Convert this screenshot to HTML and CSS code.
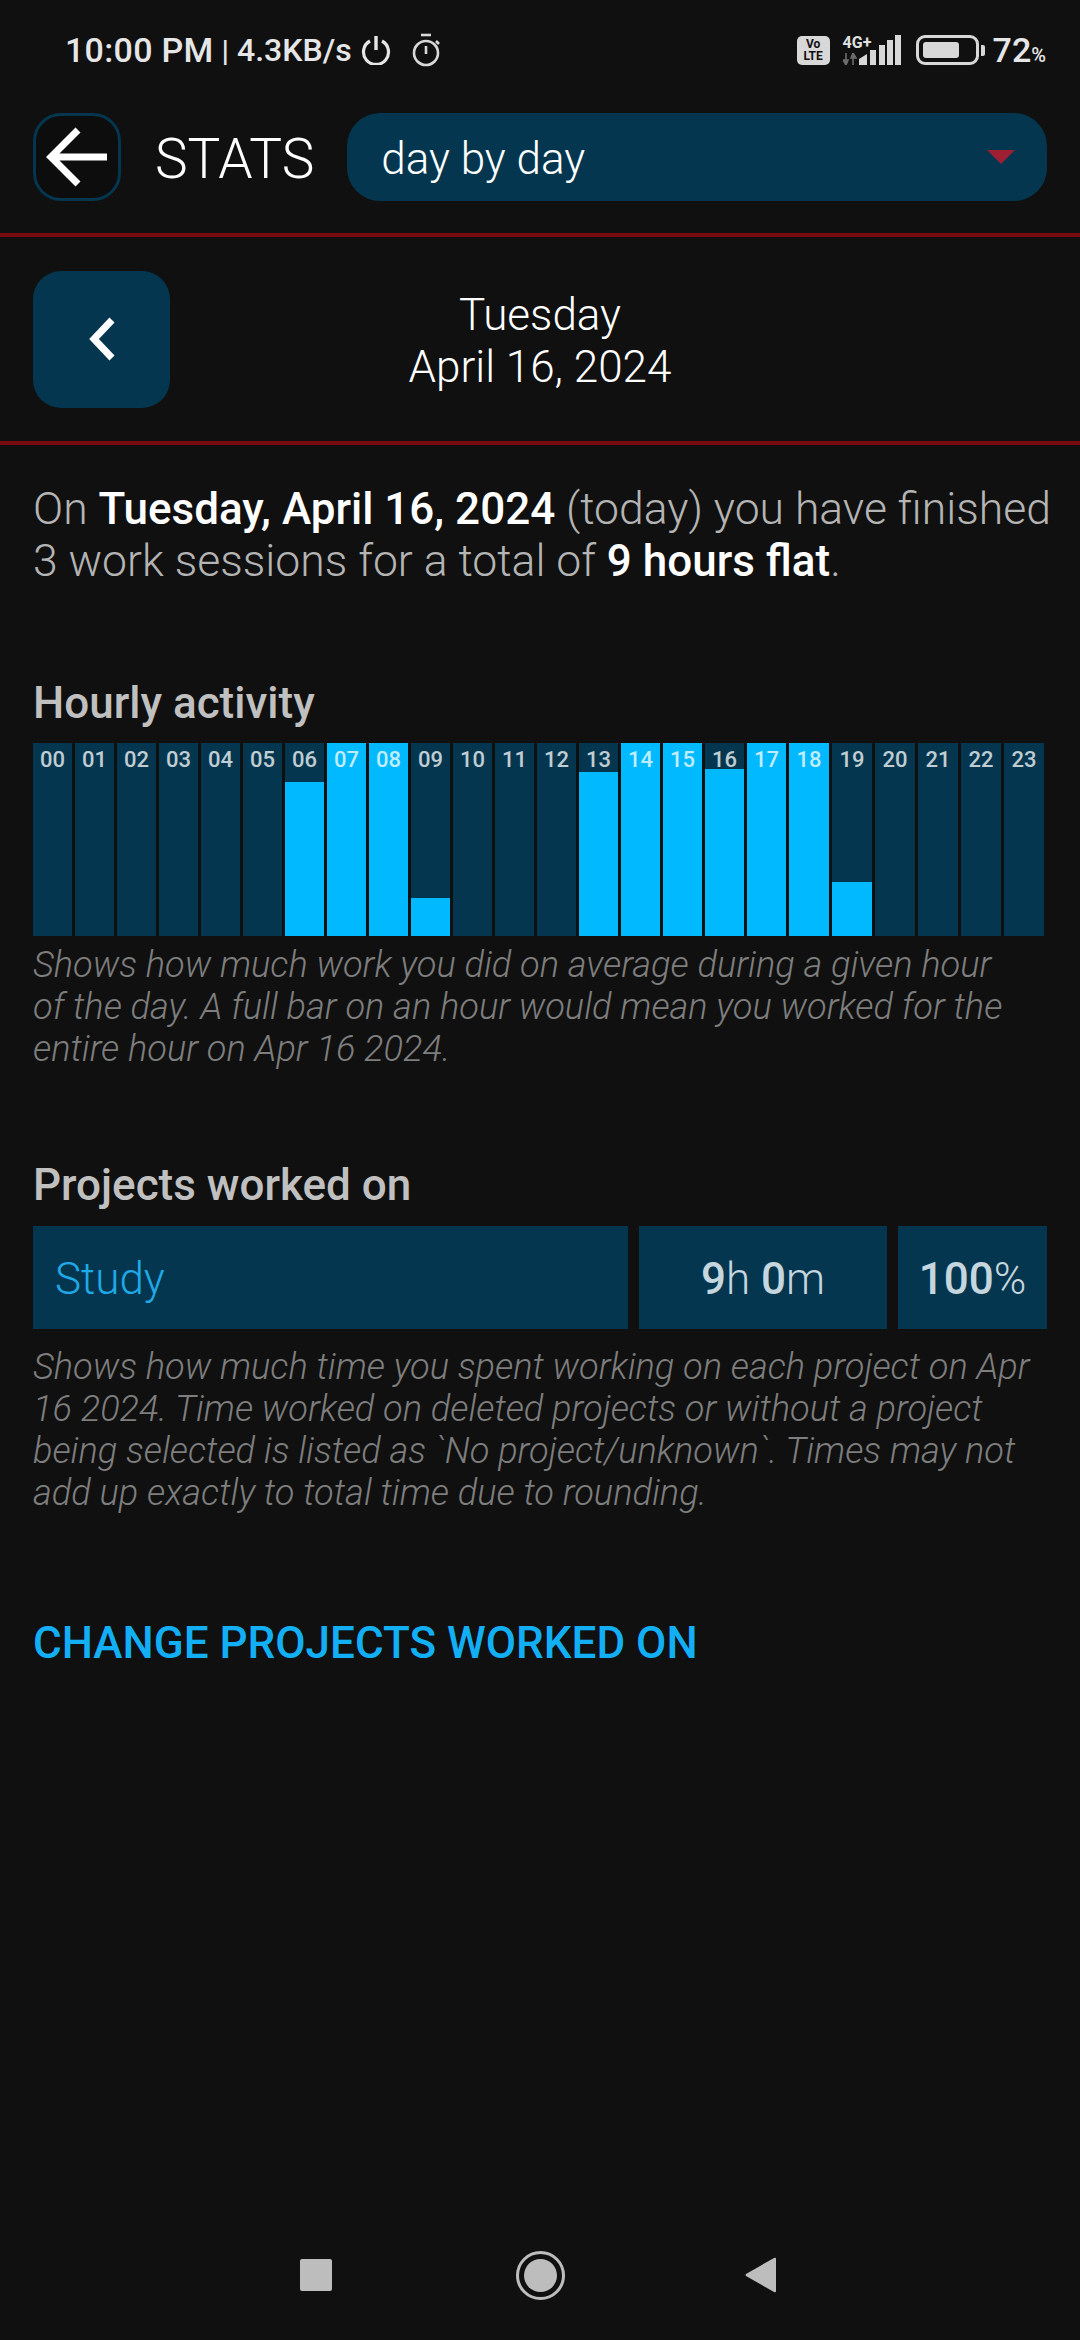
FILE: index.html
```html
<!DOCTYPE html>
<html lang="en">
<head>
    <meta charset="UTF-8">
    <meta name="viewport" content="width=device-width, initial-scale=1.0">
    <title>Stats</title>
    <link rel="stylesheet" href="styles.css">
</head>
<body>
    <div class="page">
        <!-- Status bar -->
        <div class="status-bar">
            <div class="status-left">
                <span class="clock">10:00 PM</span>
                <span class="divider">|</span>
                <span class="speed">4.3KB/s</span>
                <svg class="icon-power" width="30" height="30" viewBox="0 0 30 30">
                    <path d="M9 6 A12.5 12.5 0 1 0 21 6" fill="none" stroke="#e6e6e6" stroke-width="3.2"/>
                    <path d="M15 1 V15" stroke="#e6e6e6" stroke-width="3.4"/>
                </svg>
                <svg class="icon-timer" width="30" height="34" viewBox="0 0 30 34">
                    <path d="M10 2 H20" stroke="#d8d8d8" stroke-width="2.6"/>
                    <circle cx="15" cy="20" r="12" fill="none" stroke="#d8d8d8" stroke-width="2.6"/>
                    <path d="M15 13 V21" stroke="#d8d8d8" stroke-width="2.6"/>
                    <path d="M25 8 L28 11" stroke="#d8d8d8" stroke-width="2.6"/>
                </svg>
            </div>
            <div class="status-right">
                <span class="volte">Vo<br>LTE</span>
                <div class="network">
                    <span class="net-type">4G+</span>
                    <svg class="net-arrows" width="14" height="12" viewBox="0 0 14 12">
                        <path d="M3 0 V8 M0 7 L3 12 L5 7 Z" stroke="#6b6b6b" stroke-width="1.6" fill="#6b6b6b"/>
                        <path d="M10 12 V4 M8 5 L10 0 L13 5 Z" stroke="#6b6b6b" stroke-width="1.6" fill="#6b6b6b"/>
                    </svg>
                </div>
                <svg class="signal" width="42" height="30" viewBox="0 0 42 30">
                    <path d="M0 30 V24 L8 19 V30 Z" fill="#d8d8d8"/>
                    <rect x="11" y="15" width="6" height="15" fill="#d8d8d8"/>
                    <rect x="20" y="10" width="6" height="20" fill="#d8d8d8"/>
                    <rect x="28" y="5" width="6" height="25" fill="#d8d8d8"/>
                    <rect x="36" y="0" width="6" height="30" fill="#d8d8d8"/>
                </svg>
                <div class="battery">
                    <div class="battery-body"><div class="battery-level"></div></div>
                    <div class="battery-nub"></div>
                </div>
                <span class="battery-text">72<small>%</small></span>
            </div>
        </div>

        <!-- Header -->
        <div class="header">
            <button class="back-btn">
                <svg width="62" height="60" viewBox="0 0 62 60">
                    <path d="M61 30 H6 M32 3 L5 30 L32 57" fill="none" stroke="#fff" stroke-width="7"/>
                </svg>
            </button>
            <span class="title">STATS</span>
            <div class="dropdown">
                <span>day by day</span>
                <span class="dropdown-arrow"></span>
            </div>
        </div>

        <!-- Date picker -->
        <div class="date-row">
            <button class="prev-btn">
                <svg width="30" height="46" viewBox="0 0 30 46">
                    <path d="M25 4 L7 23 L25 42" fill="none" stroke="#fff" stroke-width="7"/>
                </svg>
            </button>
            <div class="date-text">Tuesday<br>April 16, 2024</div>
        </div>

        <main class="content">
            <p class="summary">On <b>Tuesday, April 16, 2024</b> (today) you have finished 3 work sessions for a total of <b>9 hours flat</b>.</p>

            <h3 class="section-title hourly-title">Hourly activity</h3>
            <div class="chart">
                <div class="hour"><span>00</span></div>
                <div class="hour"><span>01</span></div>
                <div class="hour"><span>02</span></div>
                <div class="hour"><span>03</span></div>
                <div class="hour"><span>04</span></div>
                <div class="hour"><span>05</span></div>
                <div class="hour"><div class="fill" style="height: 154px"></div><span>06</span></div>
                <div class="hour"><div class="fill" style="height: 100%"></div><span>07</span></div>
                <div class="hour"><div class="fill" style="height: 100%"></div><span>08</span></div>
                <div class="hour"><div class="fill" style="height: 38px"></div><span>09</span></div>
                <div class="hour"><span>10</span></div>
                <div class="hour"><span>11</span></div>
                <div class="hour"><span>12</span></div>
                <div class="hour"><div class="fill" style="height: 164px"></div><span>13</span></div>
                <div class="hour"><div class="fill" style="height: 100%"></div><span>14</span></div>
                <div class="hour"><div class="fill" style="height: 100%"></div><span>15</span></div>
                <div class="hour"><div class="fill" style="height: 167px"></div><span>16</span></div>
                <div class="hour"><div class="fill" style="height: 100%"></div><span>17</span></div>
                <div class="hour"><div class="fill" style="height: 100%"></div><span>18</span></div>
                <div class="hour"><div class="fill" style="height: 54px"></div><span>19</span></div>
                <div class="hour"><span>20</span></div>
                <div class="hour"><span>21</span></div>
                <div class="hour"><span>22</span></div>
                <div class="hour"><span>23</span></div>
            </div>
            <p class="caption">Shows how much work you did on average during a given hour of the day. A full bar on an hour would mean you worked for the entire hour on Apr 16 2024.</p>

            <h3 class="section-title projects-title">Projects worked on</h3>
            <div class="project-row">
                <div class="project-name">Study</div>
                <div class="project-time"><b>9</b>h <b>0</b>m</div>
                <div class="project-pct"><b>100</b>%</div>
            </div>
            <p class="caption">Shows how much time you spent working on each project on Apr 16 2024. Time worked on deleted projects or without a project being selected is listed as `No project/unknown`. Times may not add up exactly to total time due to rounding.</p>

            <a class="change-link" href="#">CHANGE PROJECTS WORKED ON</a>
        </main>

        <!-- Navigation bar -->
        <nav class="nav-bar">
            <div class="nav-square"></div>
            <div class="nav-home"><div class="nav-home-dot"></div></div>
            <svg class="nav-back" width="32" height="36" viewBox="0 0 32 36">
                <path d="M31 2 V34 Q31 36 29 35 L1 19 Q0 18 1 17 L29 1 Q31 0 31 2 Z" fill="#bdbdbd"/>
            </svg>
        </nav>
    </div>
</body>
</html>
```

FILE: styles.css
```css
* {
    box-sizing: border-box;
}

body {
    margin: 0;
    background-color: #101010;
    font-family: 'Roboto', sans-serif;
    color: #fff;
}

p, h3 {
    margin: 0;
}

button {
    padding: 0;
    cursor: pointer;
}

.page {
    display: flex;
    flex-direction: column;
    width: 1080px;
    height: 2340px;
    overflow: hidden;
}

/* Status bar */
.status-bar {
    display: flex;
    justify-content: space-between;
    align-items: center;
    height: 100px;
    padding: 0 34px 0 65px;
}

.status-left {
    display: flex;
    align-items: center;
    color: #e6e6e6;
    font-weight: 500;
}

.clock {
    font-size: 34px;
    letter-spacing: 0.3px;
}

.divider {
    margin: 0 8px;
    font-size: 30px;
}

.speed {
    font-size: 32px;
}

.icon-power {
    margin-left: 9px;
}

.icon-timer {
    margin-left: 20px;
}

.status-right {
    display: flex;
    align-items: center;
}

.volte {
    width: 33px;
    height: 29px;
    padding-top: 2px;
    background-color: #d8d8d8;
    border-radius: 5px;
    color: #101010;
    font-size: 12px;
    font-weight: 700;
    line-height: 12px;
    text-align: center;
}

.network {
    display: flex;
    flex-direction: column;
    width: 29px;
    height: 30px;
    margin-left: 13px;
}

.net-type {
    color: #e0e0e0;
    font-size: 16px;
    font-weight: 700;
    line-height: 15px;
    white-space: nowrap;
}

.net-arrows {
    margin-top: 3px;
}

.signal {
    margin-left: -13px;
}

.battery {
    display: flex;
    align-items: center;
    margin-left: 15px;
}

.battery-body {
    width: 63px;
    height: 30px;
    padding: 4px;
    border: 3px solid #d8d8d8;
    border-radius: 9px;
}

.battery-level {
    width: 36px;
    height: 100%;
    background-color: #d8d8d8;
    border-radius: 3px;
}

.battery-nub {
    width: 4px;
    height: 11px;
    margin-left: 2px;
    background-color: #d8d8d8;
    border-radius: 0 2px 2px 0;
}

.battery-text {
    margin-left: 8px;
    color: #e6e6e6;
    font-size: 34px;
    font-weight: 500;
}

.battery-text small {
    font-size: 20px;
}

/* Header */
.header {
    display: flex;
    align-items: center;
    height: 88px;
    margin-top: 13px;
    padding: 0 33px;
}

.back-btn {
    display: flex;
    align-items: center;
    justify-content: center;
    flex: none;
    width: 88px;
    height: 88px;
    background-color: #0d0d0d;
    border: 3px solid #04374f;
    border-radius: 28px;
}

.title {
    margin-left: 34px;
    padding-top: 3px;
    font-size: 55px;
    font-weight: 300;
}

.dropdown {
    display: flex;
    align-items: center;
    justify-content: space-between;
    flex: 1;
    height: 88px;
    margin-left: 33px;
    padding: 3px 32px 0 34px;
    background-color: #04374f;
    border-radius: 33px;
    font-size: 44px;
    font-weight: 300;
}

.dropdown-arrow {
    width: 0;
    height: 0;
    margin-top: -3px;
    border-left: 14px solid transparent;
    border-right: 14px solid transparent;
    border-top: 14px solid #9c1f33;
}

/* Date picker */
.date-row {
    display: flex;
    align-items: center;
    height: 212px;
    margin-top: 32px;
    padding: 0 33px;
    border-top: 4px solid #7a0a10;
    border-bottom: 4px solid #7a0a10;
}

.prev-btn {
    display: flex;
    align-items: center;
    justify-content: center;
    flex: none;
    width: 137px;
    height: 137px;
    background-color: #04374f;
    border: none;
    border-radius: 28px;
}

.date-text {
    flex: 1;
    padding: 3px 137px 0 0;
    font-size: 44px;
    font-weight: 300;
    line-height: 52px;
    text-align: center;
}

/* Content */
.content {
    flex: 1;
    padding: 0 33px;
}

.summary {
    margin-top: 38px;
    margin-right: -8px;
    color: #b4b4b4;
    font-size: 44.5px;
    font-weight: 300;
    line-height: 52px;
}

.summary b {
    color: #fff;
    font-size: 44px;
    font-weight: 500;
}

.section-title {
    color: #c0c0c0;
    font-size: 44px;
    font-weight: 500;
    line-height: 52px;
}

.hourly-title {
    margin-top: 90px;
}

.projects-title {
    margin-top: 89px;
}

.chart {
    display: grid;
    grid-template-columns: repeat(18, 39px) repeat(6, 40px);
    gap: 3px;
    height: 193px;
    margin-top: 14px;
}

.hour {
    position: relative;
    display: flex;
    align-items: flex-end;
    background-color: #04374f;
}

.hour span {
    position: absolute;
    top: 4px;
    left: 0;
    right: 0;
    color: rgba(255, 255, 255, 0.75);
    font-size: 22px;
    font-weight: 500;
    line-height: 26px;
    text-align: center;
}

.fill {
    width: 100%;
    background-color: #00b9ff;
}

.caption {
    width: 998px;
    margin-top: 8px;
    color: #7e7e7e;
    font-size: 36.2px;
    font-style: italic;
    font-weight: 300;
    line-height: 42px;
}

.project-row {
    display: flex;
    gap: 11px;
    height: 103px;
    margin-top: 15px;
    font-size: 44px;
    font-weight: 300;
}

.project-row > div {
    display: flex;
    align-items: center;
    padding-top: 3px;
    background-color: #04374f;
    white-space: pre;
}

.project-name {
    flex: 1;
    padding-left: 22px;
    color: #1fa9e6;
}

.project-time,
.project-pct {
    justify-content: center;
    color: #c6d6de;
}

.project-row b {
    font-weight: 500;
}

.project-time {
    width: 248px;
}

.project-pct {
    width: 149px;
}

.project-row + .caption {
    margin-top: 17px;
}

.change-link {
    display: block;
    margin-top: 103px;
    color: #12aff5;
    font-size: 44px;
    font-weight: 500;
    line-height: 52px;
    text-decoration: none;
}

/* Navigation bar */
.nav-bar {
    position: relative;
    height: 140px;
}

.nav-square {
    position: absolute;
    left: 300px;
    top: 59px;
    width: 32px;
    height: 32px;
    background-color: #bdbdbd;
    border-radius: 2px;
}

.nav-home {
    position: absolute;
    left: 516px;
    top: 51px;
    display: flex;
    align-items: center;
    justify-content: center;
    width: 49px;
    height: 49px;
    border: 3px solid #bdbdbd;
    border-radius: 50%;
}

.nav-home-dot {
    width: 33px;
    height: 33px;
    background-color: #bdbdbd;
    border-radius: 50%;
}

.nav-back {
    position: absolute;
    left: 745px;
    top: 57px;
}
```
